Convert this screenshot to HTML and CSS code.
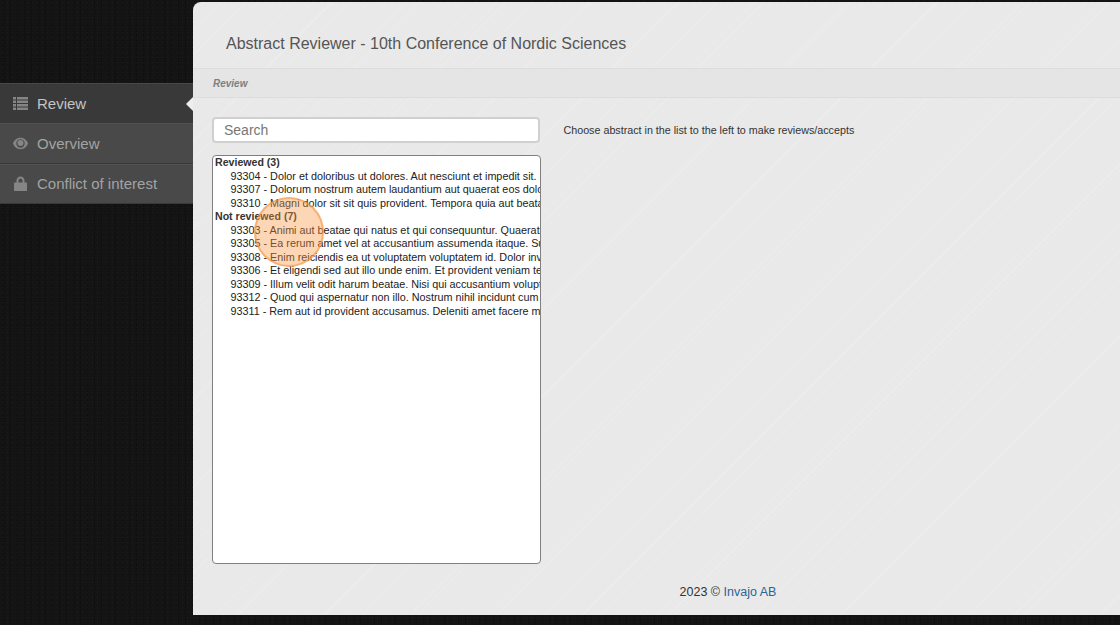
FILE: index.html
```html
<!DOCTYPE html>
<html lang="en">
<head>
    <meta charset="UTF-8">
    <title>Abstract Reviewer</title>
    <link rel="stylesheet" href="styles.css">
</head>
<body>

    <div class="sidebar">
        <a class="nav-item active">
            <svg class="nav-icon" viewBox="0 0 15 15"><path d="M0 1h3v2.500H0zM4 1h11v2.500H4zM0 4.500h3V7H0zM4 4.500h11V7H4zM0 8h3v2.500H0zM4 8h11v2.500H4zM0 11.500h3V14H0zM4 11.500h11V14H4z"/></svg>
            Review
        </a>
        <a class="nav-item">
            <svg class="nav-icon" viewBox="0 0 15 15"><path fill-rule="evenodd" d="M7.500 1.800C11.200 1.800 14 4.500 15 7.500c-1 3-3.800 5.700-7.500 5.700S1 10.500 0 7.500c1-3 3.800-5.700 7.500-5.700zM7.500 3.300a4.200 4.200 0 1 0 0 8.400 4.200 4.200 0 0 0 0-8.400z"/><circle cx="7.500" cy="7" r="3"/></svg>
            Overview
        </a>
        <a class="nav-item">
            <svg class="nav-icon" viewBox="0 0 15 15"><path fill-rule="evenodd" d="M3.500 6.500V4.800C3.500 2.300 5.200.5 7.500.5s4 1.800 4 4.300v1.700h1.700c.5 0 .8.300.8.800v7c0 .5-.3.800-.8.800H1.800c-.5 0-.8-.3-.8-.8v-7c0-.5.3-.8.800-.8zM5.500 6.500h4V4.800c0-1.300-.8-2.300-2-2.300s-2 1-2 2.300z"/></svg>
            Conflict of interest
        </a>
    </div>

    <div class="main">
        <div class="page-header">
            <h1>Abstract Reviewer - 10th Conference of Nordic Sciences</h1>
        </div>
        <div class="breadcrumb">Review</div>

        <div class="content">
            <div class="left-col">
                <input class="search" type="text" placeholder="Search">
                <div class="abstract-list">
                    <div class="group-label">Reviewed (3)</div>
                    <div class="abstract">93304 - Dolor et doloribus ut dolores. Aut nesciunt et impedit sit. Nemo et quia sed</div>
                    <div class="abstract">93307 - Dolorum nostrum autem laudantium aut quaerat eos dolore sit amet</div>
                    <div class="abstract">93310 - Magni dolor sit sit quis provident. Tempora quia aut beatae sit et</div>
                    <div class="group-label">Not reviewed (7)</div>
                    <div class="abstract">93303 - Animi aut beatae qui natus et qui consequuntur. Quaerat quia sed</div>
                    <div class="abstract">93305 - Ea rerum amet vel at accusantium assumenda itaque. Sunt et quia</div>
                    <div class="abstract">93308 - Enim reiciendis ea ut voluptatem voluptatem id. Dolor inventore aut</div>
                    <div class="abstract">93306 - Et eligendi sed aut illo unde enim. Et provident veniam tempore sit</div>
                    <div class="abstract">93309 - Illum velit odit harum beatae. Nisi qui accusantium voluptatem et</div>
                    <div class="abstract">93312 - Quod qui aspernatur non illo. Nostrum nihil incidunt cum sit amet</div>
                    <div class="abstract">93311 - Rem aut id provident accusamus. Deleniti amet facere molestiae</div>
                </div>
            </div>
            <p class="hint">Choose abstract in the list to the left to make reviews/accepts</p>
        </div>

        <div class="footer">2023 &copy; <a href="#">Invajo AB</a></div>
    </div>

    <div class="click-marker"></div>

</body>
</html>
```

FILE: styles.css
```css
* {
    box-sizing: border-box;
}

html, body {
    height: 100%;
}

body {
    margin: 0;
    display: flex;
    overflow: hidden;
    font-family: "Liberation Sans", Arial, sans-serif;
    color: #333333;
    background-color: #141414;
    background-image:
        radial-gradient(circle, #1d1d1d 0.6px, transparent 1px),
        radial-gradient(circle, #0e0e0e 0.7px, transparent 1.2px);
    background-size: 5px 5px, 7px 3px;
}

.sidebar {
    width: 193px;
    flex-shrink: 0;
    padding-top: 83px;
}

.nav-item {
    position: relative;
    display: flex;
    align-items: center;
    height: 40.330px;
    padding-left: 13px;
    font-size: 15px;
    color: #a3a3a3;
    background: #494949;
    border-top: 1px solid #525252;
    border-bottom: 1px solid #383838;
}

.nav-item.active {
    color: #c4c4c4;
    background: #393939;
    border-top-color: #474747;
}

.nav-item.active::after {
    content: "";
    position: absolute;
    right: 0;
    top: 13px;
    border: 7px solid transparent;
    border-left-width: 0;
    border-right-color: #eeeeee;
}

.nav-icon {
    width: 15px;
    height: 15px;
    margin-right: 9px;
    fill: #858585;
}

.main {
    flex: 1;
    display: flex;
    flex-direction: column;
    height: 613px;
    margin-top: 2px;
    border-top-left-radius: 8px;
    background-color: #e9e9e9;
    background-image:
        repeating-linear-gradient(135deg, transparent 0 37px, rgba(255, 255, 255, 0.18) 38px, transparent 39px 61px),
        repeating-linear-gradient(135deg, transparent 0 6px, rgba(255, 255, 255, 0.1) 7px, transparent 8px 13px);
}

.page-header {
    height: 67px;
    padding: 32px 0 0 33px;
    border-bottom: 1px solid #dddddd;
}

h1 {
    margin: 0;
    font-size: 16px;
    line-height: 19px;
    font-weight: normal;
    color: #555555;
}

.breadcrumb {
    height: 29px;
    padding: 8px 0 0 20px;
    font-size: 10px;
    line-height: 13px;
    font-weight: bold;
    font-style: italic;
    color: #7f7f7f;
    background: #e5e5e5;
    border-bottom: 1px solid #dcdcdc;
}

.content {
    flex: 1;
    display: flex;
    gap: 23px;
    padding: 19px 0 0 19px;
    min-height: 0;
}

.left-col {
    width: 329px;
    flex-shrink: 0;
}

.search {
    display: block;
    width: 328px;
    height: 26px;
    padding: 0 10px;
    font-family: inherit;
    font-size: 14px;
    color: #333333;
    background: #ffffff;
    border: 2px solid #d0d0d0;
    border-radius: 4px;
    outline: none;
}

.search::placeholder {
    color: #777777;
}

.abstract-list {
    height: 409px;
    margin-top: 12px;
    padding: 0 0 0 2px;
    overflow: hidden;
    font-size: 10.800px;
    line-height: 13.550px;
    color: #222222;
    background: #ffffff;
    border: 1px solid #808080;
    border-radius: 4px;
}

.group-label {
    font-size: 10.600px;
    font-weight: bold;
    white-space: nowrap;
    color: #333333;
}

.abstract {
    padding-left: 15.500px;
    white-space: nowrap;
}

.hint {
    margin: 6px 0 0 -0.500px;
    font-size: 10.720px;
    line-height: 14px;
    color: #333333;
}

.footer {
    height: 49px;
    padding: 18px 0 0 143px;
    text-align: center;
    font-size: 12.500px;
    line-height: 16px;
}

.footer a {
    color: #2a6496;
    text-decoration: none;
}

.click-marker {
    position: absolute;
    left: 254px;
    top: 197px;
    width: 70px;
    height: 70px;
    border-radius: 50%;
    background: rgba(250, 150, 60, 0.38);
    border: 2px solid rgba(245, 150, 70, 0.6);
}
```
